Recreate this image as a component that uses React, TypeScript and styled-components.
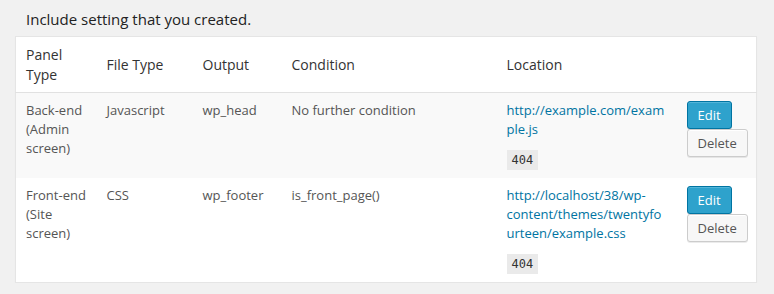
import React from 'react';
import styled, { createGlobalStyle } from 'styled-components';

interface Setting {
    panel: string;
    fileType: string;
    output: string;
    condition: string;
    location: string;
    status: string;
}

const settings: Setting[] = [
    {
        panel: 'Back-end (Admin screen)',
        fileType: 'Javascript',
        output: 'wp_head',
        condition: 'No further condition',
        location: 'http://example.com/example.js',
        status: '404'
    },
    {
        panel: 'Front-end (Site screen)',
        fileType: 'CSS',
        output: 'wp_footer',
        condition: 'is_front_page()',
        location: 'http://localhost/38/wp-content/themes/twentyfourteen/example.css',
        status: '404'
    }
];

const GlobalStyle = createGlobalStyle`
    html, body {
        margin: 0;
        padding: 0;
        background: #f1f1f1;
    }
    body {
        font-family: "Open Sans", "Liberation Sans", sans-serif;
        font-size: 13px;
        color: #444;
    }
`;

const Page = styled.div`
    padding: 0 17px 0 15px;
`;

const Heading = styled.h3`
    margin: 0;
    padding: 9px 0 0 11px;
    height: 36px;
    box-sizing: border-box;
    font-size: 15px;
    font-weight: 400;
    line-height: 20px;
    color: #222;
`;

const Table = styled.table`
    width: 100%;
    border-collapse: collapse;
    border-spacing: 0;
    table-layout: fixed;
    background: #fff;
    border: 1px solid #e5e5e5;
    box-shadow: 0 1px 1px rgba(0, 0, 0, 0.04);
`;

const HeadCell = styled.th<{ $width?: number }>`
    box-sizing: border-box;
    width: ${p => (p.$width ? `${p.$width}px` : 'auto')};
    padding: 8px 10px;
    text-align: left;
    vertical-align: middle;
    font-size: 14px;
    font-weight: 400;
    line-height: 19.6px;
    color: #333;
    border-bottom: 1px solid #e1e1e1;
`;

const Row = styled.tr<{ $alt?: boolean }>`
    background: ${p => (p.$alt ? '#f9f9f9' : '#fff')};
`;

const Cell = styled.td`
    box-sizing: border-box;
    padding: 8px 10px;
    vertical-align: top;
    font-size: 13px;
    line-height: 19px;
    color: #555;
    overflow-wrap: break-word;
`;

const Link = styled.a`
    color: #0074a2;
    text-decoration: none;
`;

const StatusLine = styled.div`
    display: flex;
    margin-top: 11px;
`;

const Code = styled.code`
    display: block;
    padding: 3px 5px 2px;
    background: #eaeaea;
    font-family: "DejaVu Sans Mono", "Liberation Mono", monospace;
    font-size: 12px;
    line-height: 15px;
    color: #333;
`;

const Actions = styled.div`
    display: flex;
    flex-direction: column;
    align-items: flex-start;
`;

const Button = styled.button<{ $primary?: boolean }>`
    box-sizing: border-box;
    height: 28px;
    margin: 0;
    padding: 0 10px 1px;
    font-family: "Open Sans", "Liberation Sans", sans-serif;
    font-size: 13px;
    line-height: 26px;
    border-radius: 3px;
    cursor: pointer;
    border: 1px solid ${p => (p.$primary ? '#0074a2' : '#ccc')};
    background: ${p => (p.$primary ? '#2ea2cc' : '#f7f7f7')};
    color: ${p => (p.$primary ? '#fff' : '#555')};
    box-shadow: ${p =>
        p.$primary
            ? 'inset 0 1px 0 rgba(120, 200, 230, 0.5), 0 1px 0 rgba(0, 0, 0, 0.15)'
            : 'inset 0 1px 0 #fff, 0 1px 0 rgba(0, 0, 0, 0.08)'};
`;

const App: React.FC = () => {
    return (
        <Page>
            <GlobalStyle />
            <Heading>Include setting that you created.</Heading>
            <Table>
                <thead>
                    <tr>
                        <HeadCell $width={81}>Panel Type</HeadCell>
                        <HeadCell $width={96}>File Type</HeadCell>
                        <HeadCell $width={89}>Output</HeadCell>
                        <HeadCell $width={215}>Condition</HeadCell>
                        <HeadCell $width={180}>Location</HeadCell>
                        <HeadCell />
                    </tr>
                </thead>
                <tbody>
                    {settings.map((s, i) => (
                        <Row key={i} $alt={i % 2 === 0}>
                            <Cell>{s.panel}</Cell>
                            <Cell>{s.fileType}</Cell>
                            <Cell>{s.output}</Cell>
                            <Cell>{s.condition}</Cell>
                            <Cell>
                                <Link href="#">{s.location}</Link>
                                <StatusLine>
                                    <Code>{s.status}</Code>
                                </StatusLine>
                            </Cell>
                            <Cell>
                                <Actions>
                                    <Button $primary>Edit</Button>
                                    <Button>Delete</Button>
                                </Actions>
                            </Cell>
                        </Row>
                    ))}
                </tbody>
            </Table>
        </Page>
    );
};

export default App;
